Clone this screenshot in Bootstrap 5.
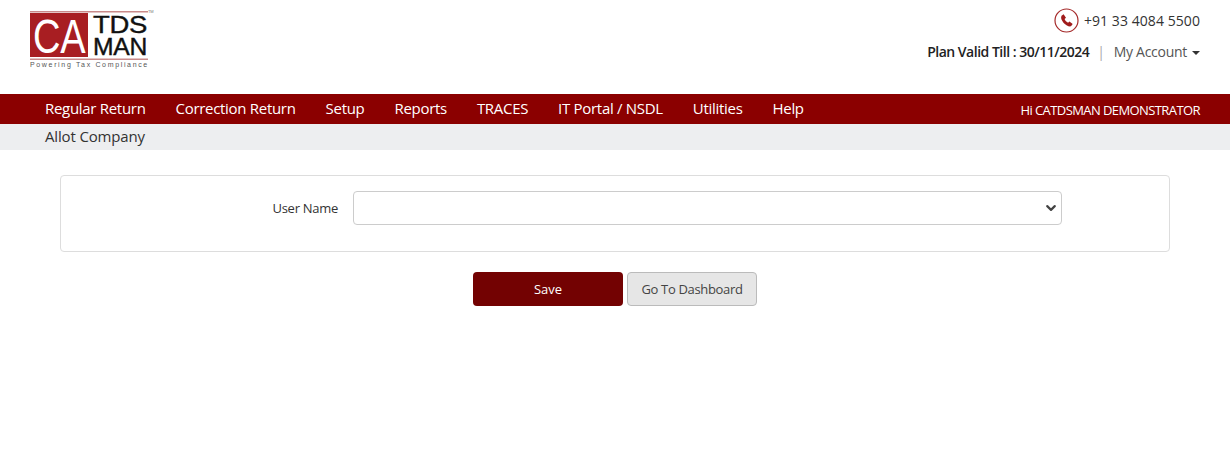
<!DOCTYPE html>
<html lang="en">
<head>
<meta charset="utf-8">
<title>Allot Company</title>
<link href="https://cdn.jsdelivr.net/npm/bootstrap@5.3.0/dist/css/bootstrap.min.css" rel="stylesheet">
<style>
body{font-family:"Open Sans","Noto Sans",sans-serif;background:#fff;color:#212529;font-size:14px;letter-spacing:-.02em}
.top-head{height:94px;padding:0 30px 0 30px}
.logo-box{margin-top:9px;display:block}
.phone-row{height:24px;margin-top:8px;font-size:14px;color:#333;letter-spacing:.005em;gap:5px}
.plan-row{margin-top:10px;font-size:14px;line-height:20px}
.plan-txt{font-weight:600;color:#222;letter-spacing:-.035em}
.sep{color:#aaa;margin:0 9px 0 8px}
.acct{color:#555;text-decoration:none}
.acct-caret{display:inline-block;width:0;height:0;border-left:4px solid transparent;border-right:4px solid transparent;border-top:4px solid #333;margin-left:5px;vertical-align:2px}
.main-bar{background:#8b0000;height:30px;padding:0 30px 0 45px}
.main-link{color:#fff;font-size:15px;text-decoration:none;margin-right:30px;line-height:28px;letter-spacing:-.02em}
.main-link:hover{color:#fff}
.hi-user{color:#fff;font-size:13px;letter-spacing:-.045em;margin-top:3px}
.sub-bar{background:#edeef0;height:26px;padding-left:45px;font-size:15px;line-height:24px;color:#333;letter-spacing:-.01em}
.form-panel{margin:25px 60px 0;height:77px;border:1px solid #ddd;border-radius:4px;padding-top:15px}
.user-label{width:277px;height:36px;text-align:right;margin:0 15px 0 0;font-size:13px;color:#333}
.user-select{width:709px;height:34px;padding:0 12px;border-color:#ccc;border-radius:4px;background-image:url("data:image/svg+xml,%3csvg xmlns='http://www.w3.org/2000/svg' viewBox='0 0 16 16'%3e%3cpath fill='none' stroke='%23444' stroke-linecap='round' stroke-linejoin='round' stroke-width='3.400' d='M2 5l6 6 6-6'/%3e%3c/svg%3e");background-size:10px 10px;background-position:right 5px center}
.btn-line{margin-top:20px;gap:4px}
.save-btn{width:150px;height:34px;background:#730202;border:0;border-radius:4px;color:#fff;font-size:13px;padding:2px 0 0}
.save-btn:hover{background:#730202;color:#fff}
.dash-btn{width:130px;height:34px;background:#e6e6e6;border:1px solid #bbb;border-radius:4px;color:#444;font-size:13px;padding:2px 0 0;letter-spacing:-.025em}
.dash-btn:hover{background:#e6e6e6;color:#444;border-color:#bbb}
</style>
</head>
<body>
<header class="top-head d-flex justify-content-between align-items-start">
  <svg class="logo-box" width="126" height="62" viewBox="0 0 126 62" role="img" aria-label="CA TDS MAN logo">
    <rect x="0" y="2" width="118" height="1.5" fill="#c98a8a"/>
    <rect x="0" y="4" width="58" height="44" fill="#a81e22"/>
    <text transform="translate(3 44) scale(1 1.28)" font-family="Liberation Sans,sans-serif" font-size="38" fill="#fff">CA</text>
    <text x="63" y="24" font-family="Liberation Sans,sans-serif" font-size="24" fill="#111" stroke="#111" stroke-width=".4" textLength="54" lengthAdjust="spacingAndGlyphs">TDS</text>
    <text x="63" y="46" font-family="Liberation Sans,sans-serif" font-size="24" fill="#111" stroke="#111" stroke-width=".4" textLength="54" lengthAdjust="spacingAndGlyphs">MAN</text>
    <rect x="0" y="49.5" width="118" height="1.5" fill="#c98a8a"/>
    <text x="0" y="58" font-family="Liberation Sans,sans-serif" font-size="7" fill="#555" textLength="117" lengthAdjust="spacing">Powering Tax Compliance</text>
    <text x="118" y="4" font-family="Liberation Sans,sans-serif" font-size="4" fill="#777">TM</text>
  </svg>
  <div class="text-end">
    <div class="phone-row d-flex justify-content-end align-items-center">
      <svg width="25" height="25" viewBox="0 0 25 25" aria-hidden="true">
        <circle cx="12.5" cy="12.5" r="11.5" fill="none" stroke="#a52a2a" stroke-width="1.2"/>
        <path d="M7.500 7.800 9.600 6.300 12 9.800 10.600 11c.5 1.500 2 3.100 3.500 3.800l1.300-1.300 3.300 2.500-1.500 2.100c-1 .7-2.700.3-4.700-.9-2.300-1.400-4.100-3.500-5-5.700-.5-1.500-.5-2.800 0-3.500z" fill="#a01c1c"/>
      </svg>
      <span>+91 33 4084 5500</span>
    </div>
    <div class="plan-row"><span class="plan-txt">Plan Valid Till : 30/11/2024</span><span class="sep">|</span><a class="acct" href="#">My Account<span class="acct-caret"></span></a></div>
  </div>
</header>
<nav class="main-bar d-flex justify-content-between">
  <div class="d-flex">
    <a class="main-link" href="#">Regular Return</a>
    <a class="main-link" href="#">Correction Return</a>
    <a class="main-link" href="#">Setup</a>
    <a class="main-link" href="#">Reports</a>
    <a class="main-link" href="#">TRACES</a>
    <a class="main-link" href="#">IT Portal / NSDL</a>
    <a class="main-link" href="#">Utilities</a>
    <a class="main-link" href="#">Help</a>
  </div>
  <div class="hi-user d-flex align-items-center">Hi CATDSMAN DEMONSTRATOR</div>
</nav>
<div class="sub-bar">Allot Company</div>
<form>
  <div class="form-panel d-flex align-items-start">
    <label class="user-label col-form-label py-0 d-flex align-items-center justify-content-end" for="uname">User Name</label>
    <select class="form-select user-select" id="uname"><option></option></select>
  </div>
  <div class="btn-line d-flex justify-content-center">
    <button type="button" class="btn save-btn">Save</button>
    <button type="button" class="btn dash-btn">Go To Dashboard</button>
  </div>
</form>
<script src="https://cdn.jsdelivr.net/npm/bootstrap@5.3.0/dist/js/bootstrap.bundle.min.js"></script>
</body>
</html>
